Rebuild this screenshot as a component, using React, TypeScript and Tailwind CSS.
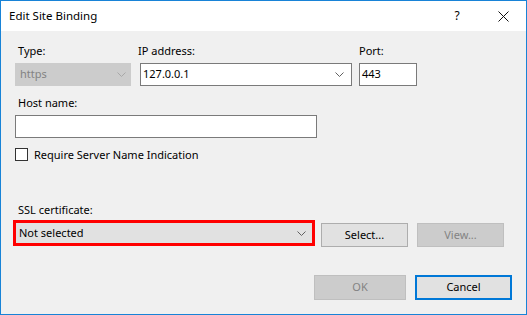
import React from 'react'

// Chevron used by the combo boxes
function Chevron({ muted = false }: { muted?: boolean }) {
  return (
    <svg width="9" height="5" viewBox="0 0 9 5" className="shrink-0">
      <path d="M0.5 0.5 L4.5 4.5 L8.5 0.5" fill="none" stroke={muted ? '#a8a8a8' : '#606060'} strokeWidth="1" />
    </svg>
  )
}

function Label({ children, className = '' }: { children: React.ReactNode; className?: string }) {
  return <div className={`h-4 leading-4 mb-1 ${className}`}>{children}</div>
}

export default function App() {
  return (
    <div className="w-[527px] h-[315px] border border-[#1883d7] flex flex-col bg-[#f0f0f0] text-[11px] text-black font-['Segoe_UI','Noto_Sans',sans-serif]">
      {/* title bar */}
      <div className="h-[30px] bg-white flex items-center shrink-0">
        <div className="pl-2 flex-1 text-[11.5px]">Edit Site Binding</div>
        <div className="w-[46px] flex justify-center text-[12px]">?</div>
        <div className="w-[46px] flex justify-center">
          <svg width="11" height="11" viewBox="0 0 11 11">
            <path d="M0.5 0.5 L10.5 10.5 M10.5 0.5 L0.5 10.5" stroke="#111" strokeWidth="1" />
          </svg>
        </div>
      </div>

      <div className="flex-1 flex flex-col pt-3 pl-[14px]">
        {/* type / ip / port */}
        <div className="flex">
          <div className="w-[116px]">
            <Label className="pl-[3px]">Type:</Label>
            <div className="h-[23px] bg-[#cccccc] border border-[#cccccc] flex items-center justify-between pl-[4px] pr-[4px] text-[#838383]">
              <span>https</span>
              <Chevron muted />
            </div>
          </div>
          <div className="w-[212px] ml-[9px]">
            <Label className="-ml-[2px]">IP address:</Label>
            <div className="h-[23px] bg-white border border-[#7a7a7a] flex items-center justify-between pl-[2px] pr-[7px]">
              <span>127.0.0.1</span>
              <Chevron />
            </div>
          </div>
          <div className="w-[58px] ml-[7px]">
            <Label>Port:</Label>
            <div className="h-[23px] bg-white border border-[#7a7a7a] flex items-center pl-[2px]">443</div>
          </div>
        </div>

        {/* host name */}
        <div className="mt-[9px] w-[302px]">
          <Label className="pl-[3px]">Host name:</Label>
          <div className="h-[23px] bg-white border border-[#7a7a7a]" />
        </div>

        <div className="mt-[10px] flex items-center gap-[6px] h-[13px]">
          <div className="w-[13px] h-[13px] bg-white border border-[#333333]" />
          <span className="leading-4">Require Server Name Indication</span>
        </div>

        {/* ssl certificate */}
        <Label className="mt-[41px] pl-[3px] !mb-[2px]">SSL certificate:</Label>
        <div className="flex items-start">
          <div className="-ml-[2px] w-[302px] h-[26px] border-[3px] border-[#ff0000] bg-[#e1e1e1] flex items-center justify-between pl-[3px] pr-[6px]">
            <span>Not selected</span>
            <Chevron />
          </div>
          <button className="ml-[6px] mt-[3px] w-[87px] h-[24px] bg-[#e1e1e1] border border-[#adadad]">Select...</button>
          <button className="ml-[9px] mt-[3px] w-[87px] h-[24px] bg-[#cccccc] border border-[#bfbfbf] text-[#838383]">View...</button>
        </div>

        <div className="flex justify-end mt-[28px] pr-[14px] gap-[9px]">
          <button className="w-[92px] h-[25px] bg-[#cccccc] border border-[#bfbfbf] text-[#838383]">OK</button>
          <button className="w-[97px] h-[25px] bg-[#e1e1e1] border-2 border-[#0078d7]">Cancel</button>
        </div>
      </div>
    </div>
  )
}
